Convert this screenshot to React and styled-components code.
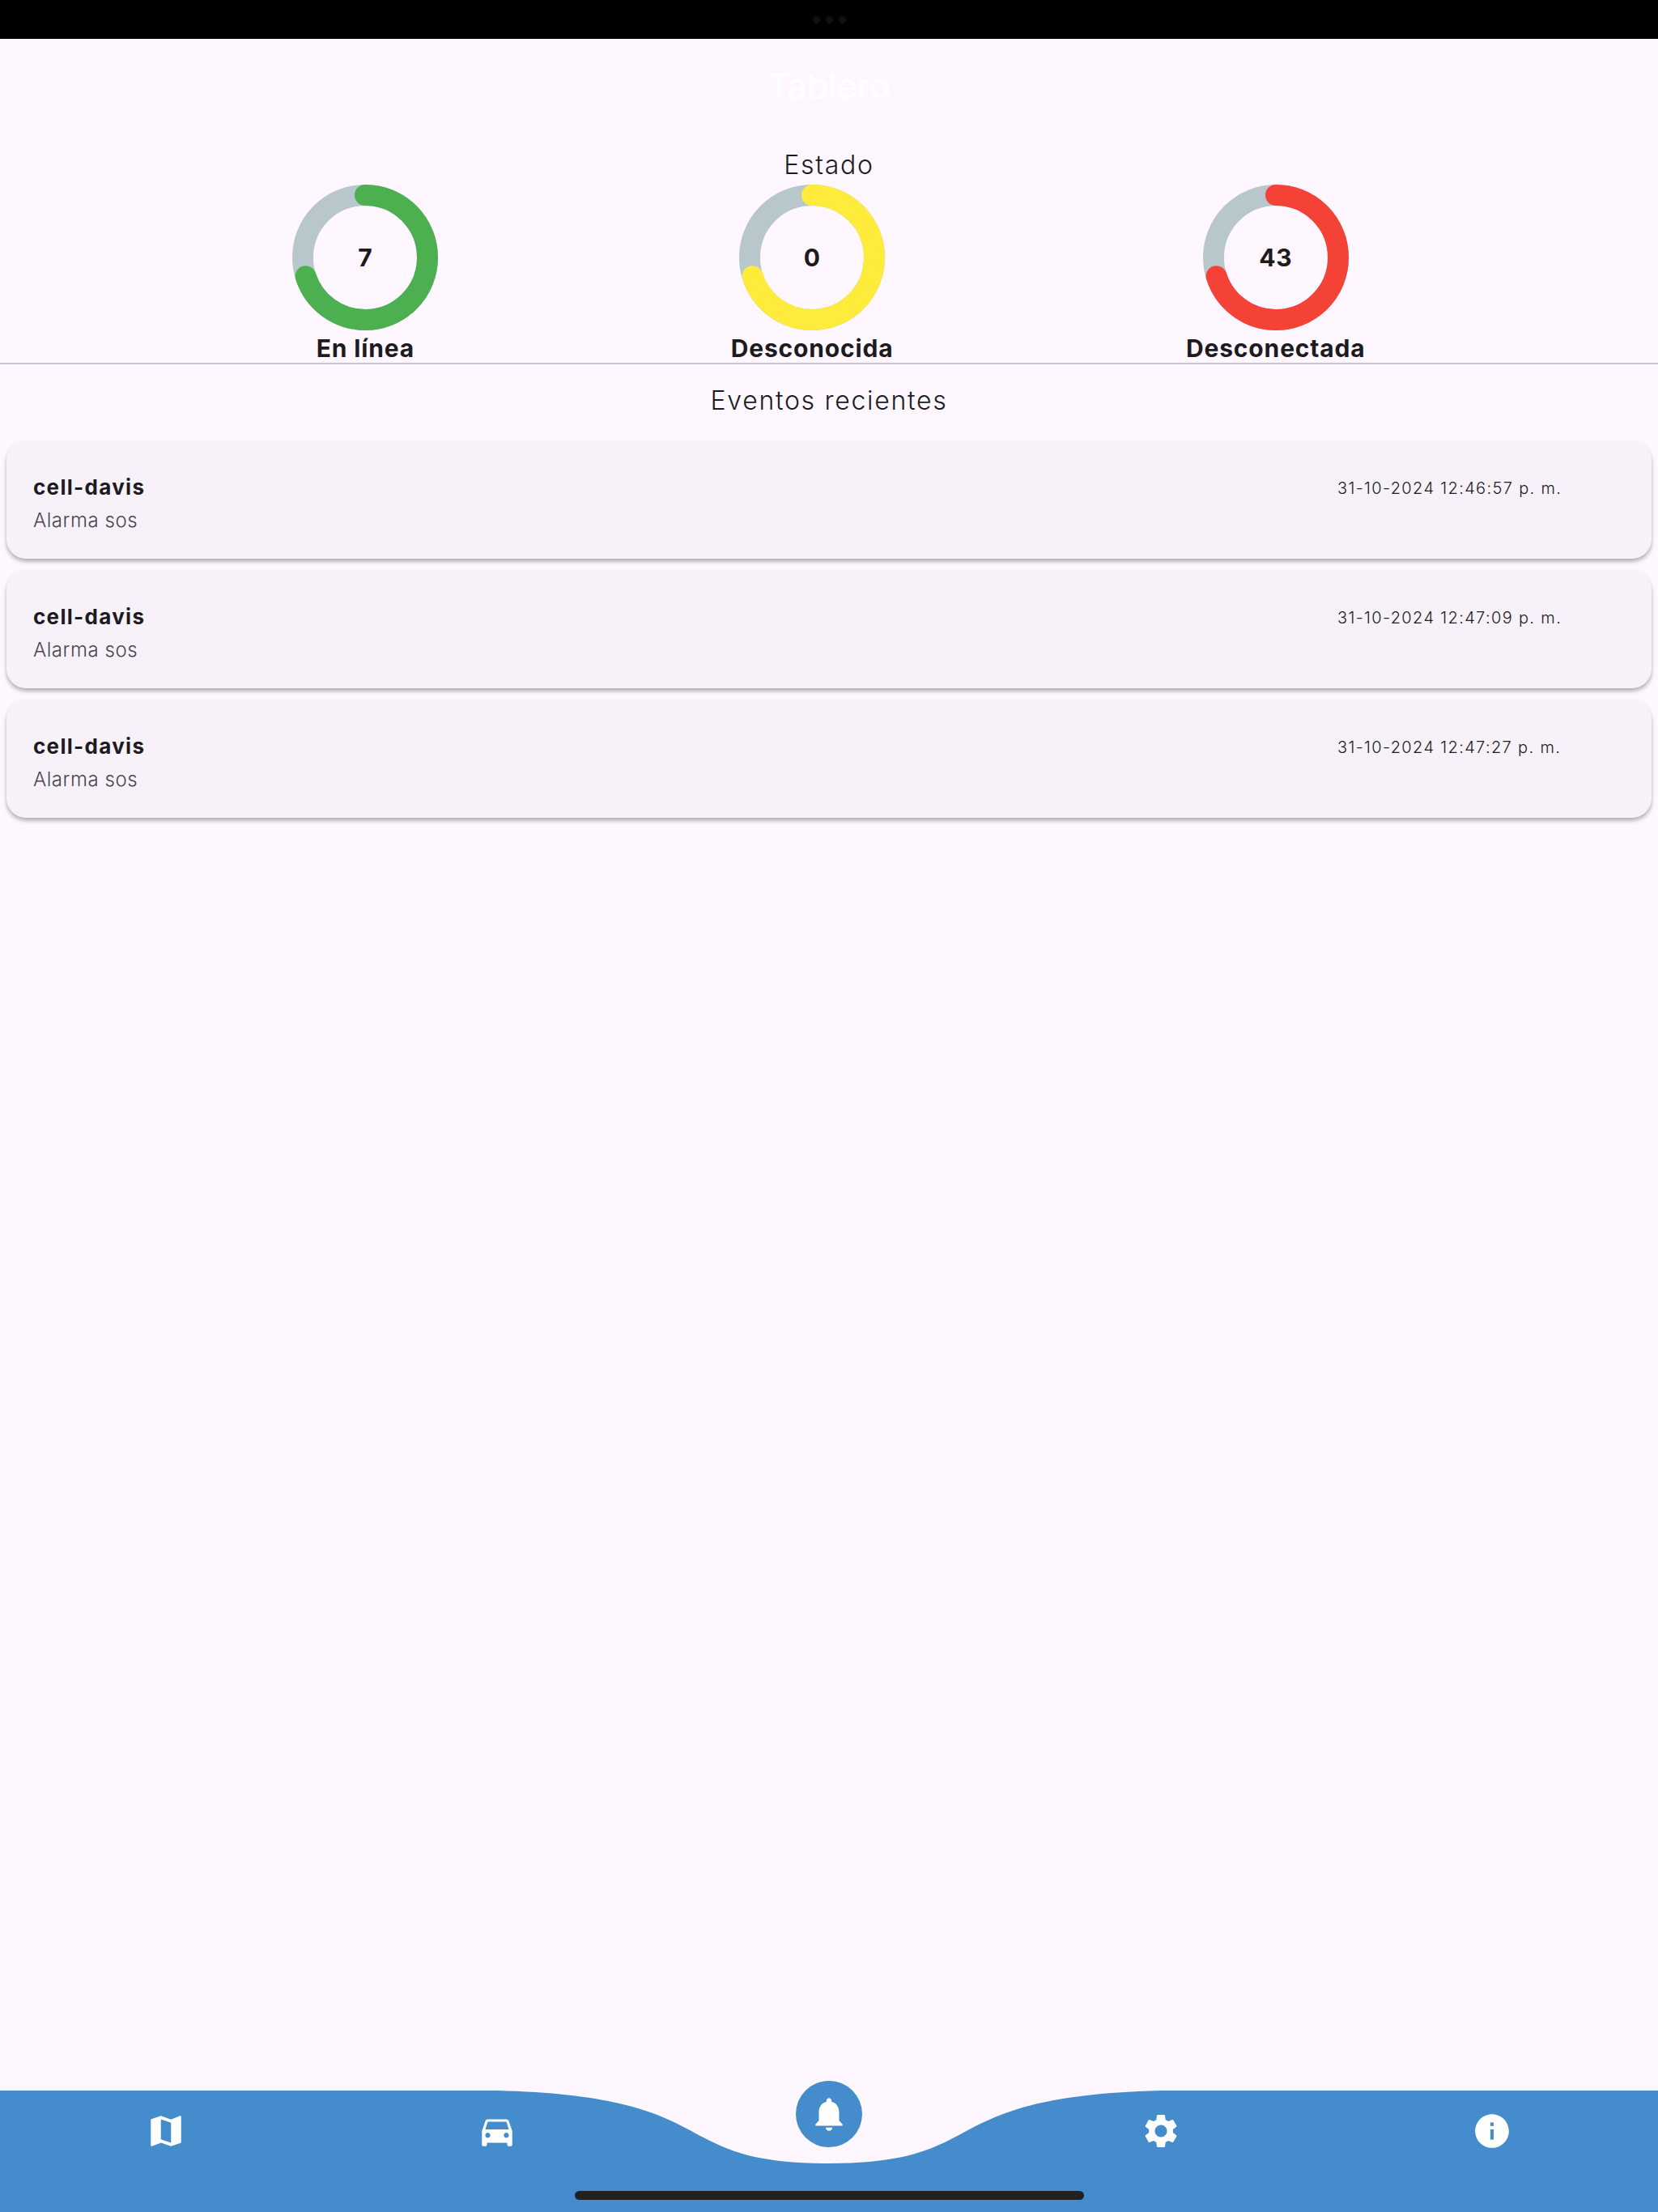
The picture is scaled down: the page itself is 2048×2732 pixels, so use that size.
import React from "react";
import styled, { createGlobalStyle } from "styled-components";
import { MdMap, MdDirectionsCar, MdNotifications, MdSettings, MdInfo } from "react-icons/md";

const GlobalStyle = createGlobalStyle`
  html, body {
    margin: 0;
    padding: 0;
    background: #fef7ff;
  }
  * {
    box-sizing: border-box;
  }
`;

const Page = styled.div`
  width: 2048px;
  height: 2732px;
  display: flex;
  flex-direction: column;
  background: #fef7ff;
  color: #1d1b20;
  font-family: Inter, "Liberation Sans", sans-serif;
  overflow: hidden;
`;

const StatusBar = styled.div`
  height: 48px;
  flex: none;
  background: #000;
  display: flex;
  align-items: center;
  justify-content: center;
  gap: 7px;
`;

const CameraDot = styled.span`
  width: 9px;
  height: 9px;
  border-radius: 50%;
  background: #111;
`;

const Header = styled.header`
  height: 132px;
  flex: none;
  padding-top: 32px;
  text-align: center;
  color: #fff;
  font-size: 43px;
  line-height: 52px;
`;

const Main = styled.main`
  flex: 1;
`;

const SectionTitle = styled.h2`
  margin: 0;
  height: 48px;
  text-align: center;
  font-size: 32px;
  font-weight: 350;
  line-height: 48px;
  letter-spacing: 1.7px;
`;

const StatusRow = styled.div`
  display: flex;
  justify-content: space-evenly;
  height: 220px;
  align-items: flex-start;
`;

const StatusItem = styled.div`
  display: flex;
  flex-direction: column;
  align-items: center;
`;

const RingBox = styled.div`
  position: relative;
  width: 180px;
  height: 180px;
`;

const RingValue = styled.span`
  position: absolute;
  inset: 0;
  display: flex;
  align-items: center;
  justify-content: center;
  font-size: 30px;
  font-weight: 700;
  letter-spacing: 0.6px;
`;

const StatusLabel = styled.span`
  margin-top: 2px;
  font-size: 30px;
  font-weight: 700;
  line-height: 40px;
  letter-spacing: 0.85px;
  white-space: nowrap;
`;

const Divider = styled.hr`
  margin: 0;
  border: 0;
  height: 2px;
  background: #cac4d0;
`;

const EventsTitle = styled(SectionTitle)`
  margin-top: 21px;
`;

const EventList = styled.div`
  display: flex;
  flex-direction: column;
  gap: 15px;
  margin: 26px 8px 0;
`;

const EventCard = styled.article`
  height: 145px;
  padding: 37px 33px 0;
  display: grid;
  grid-template-columns: 1fr 355px;
  background: #f7f2fa;
  border-radius: 24px;
  box-shadow: 0 4px 5px rgba(0, 0, 0, 0.25), 0 1px 5px rgba(0, 0, 0, 0.06);
`;

const EventName = styled.div`
  font-size: 26px;
  font-weight: 700;
  line-height: 40px;
  letter-spacing: 1.3px;
`;

const EventKind = styled.div`
  margin-top: 1px;
  color: #49454f;
  font-size: 24px;
  font-weight: 350;
  line-height: 40px;
  letter-spacing: 0.55px;
`;

const EventDate = styled.div`
  padding-top: 1px;
  font-size: 20px;
  font-weight: 350;
  line-height: 40px;
  letter-spacing: 1.35px;
  white-space: nowrap;
`;

const NavBar = styled.nav`
  position: relative;
  flex: none;
  height: 150px;
  display: grid;
  grid-template-columns: repeat(5, 1fr);
  justify-items: center;
  padding-top: 25px;
  color: #fff;
`;

const NavShape = styled.svg`
  position: absolute;
  inset: 0;
  width: 100%;
  height: 100%;
`;

const NavIcon = styled.span`
  position: relative;
  width: 50px;
  height: 50px;
  display: flex;
`;

const ActiveBubble = styled.span`
  position: absolute;
  top: -12px;
  left: 983px;
  width: 82px;
  height: 82px;
  border-radius: 50%;
  background: #448ccb;
  display: flex;
  align-items: center;
  justify-content: center;
`;

const HomeIndicator = styled.span`
  position: absolute;
  left: 710px;
  bottom: 15px;
  width: 629px;
  height: 11px;
  border-radius: 6px;
  background: #212121;
`;

const Ring = ({ value, color }) => {
  const radius = 77;
  const length = 2 * Math.PI * radius;
  return (
    <svg width="180" height="180" viewBox="0 0 180 180">
      <circle cx="90" cy="90" r={radius} fill="none" stroke="#b7c7cb" strokeWidth="26" />
      <circle
        cx="90"
        cy="90"
        r={radius}
        fill="none"
        stroke={color}
        strokeWidth="26"
        strokeLinecap="round"
        strokeDasharray={`${length * value} ${length}`}
        transform="rotate(-90 90 90)"
      />
    </svg>
  );
};

const statuses = [
  { label: "En línea", count: 7, color: "#4caf50" },
  { label: "Desconocida", count: 0, color: "#ffeb3b" },
  { label: "Desconectada", count: 43, color: "#f44336" },
];

const events = [
  { name: "cell-davis", kind: "Alarma sos", date: "31-10-2024 12:46:57 p. m." },
  { name: "cell-davis", kind: "Alarma sos", date: "31-10-2024 12:47:09 p. m." },
  { name: "cell-davis", kind: "Alarma sos", date: "31-10-2024 12:47:27 p. m." },
];

const App = () => (
  <Page>
    <GlobalStyle />
    <StatusBar>
      <CameraDot />
      <CameraDot />
      <CameraDot />
    </StatusBar>
    <Header>Tablero</Header>
    <Main>
      <SectionTitle>Estado</SectionTitle>
      <StatusRow>
        {statuses.map((s) => (
          <StatusItem key={s.label}>
            <RingBox>
              <Ring value={0.7} color={s.color} />
              <RingValue>{s.count}</RingValue>
            </RingBox>
            <StatusLabel>{s.label}</StatusLabel>
          </StatusItem>
        ))}
      </StatusRow>
      <Divider />
      <EventsTitle>Eventos recientes</EventsTitle>
      <EventList>
        {events.map((e) => (
          <EventCard key={e.date}>
            <div>
              <EventName>{e.name}</EventName>
              <EventKind>{e.kind}</EventKind>
            </div>
            <EventDate>{e.date}</EventDate>
          </EventCard>
        ))}
      </EventList>
    </Main>
    <NavBar>
      <NavShape viewBox="0 0 2048 150" preserveAspectRatio="none">
        <path
          fill="#448ccb"
          d="M0 0H614.4C901.12 7.5 819.2 90 1024 90C1228.8 90 1146.88 7.5 1433.6 0H2048V150H0Z"
        />
      </NavShape>
      <NavIcon><MdMap size={50} /></NavIcon>
      <NavIcon><MdDirectionsCar size={50} /></NavIcon>
      <span />
      <NavIcon><MdSettings size={50} /></NavIcon>
      <NavIcon><MdInfo size={50} /></NavIcon>
      <ActiveBubble><MdNotifications size={50} /></ActiveBubble>
      <HomeIndicator />
    </NavBar>
  </Page>
);

export default App;
